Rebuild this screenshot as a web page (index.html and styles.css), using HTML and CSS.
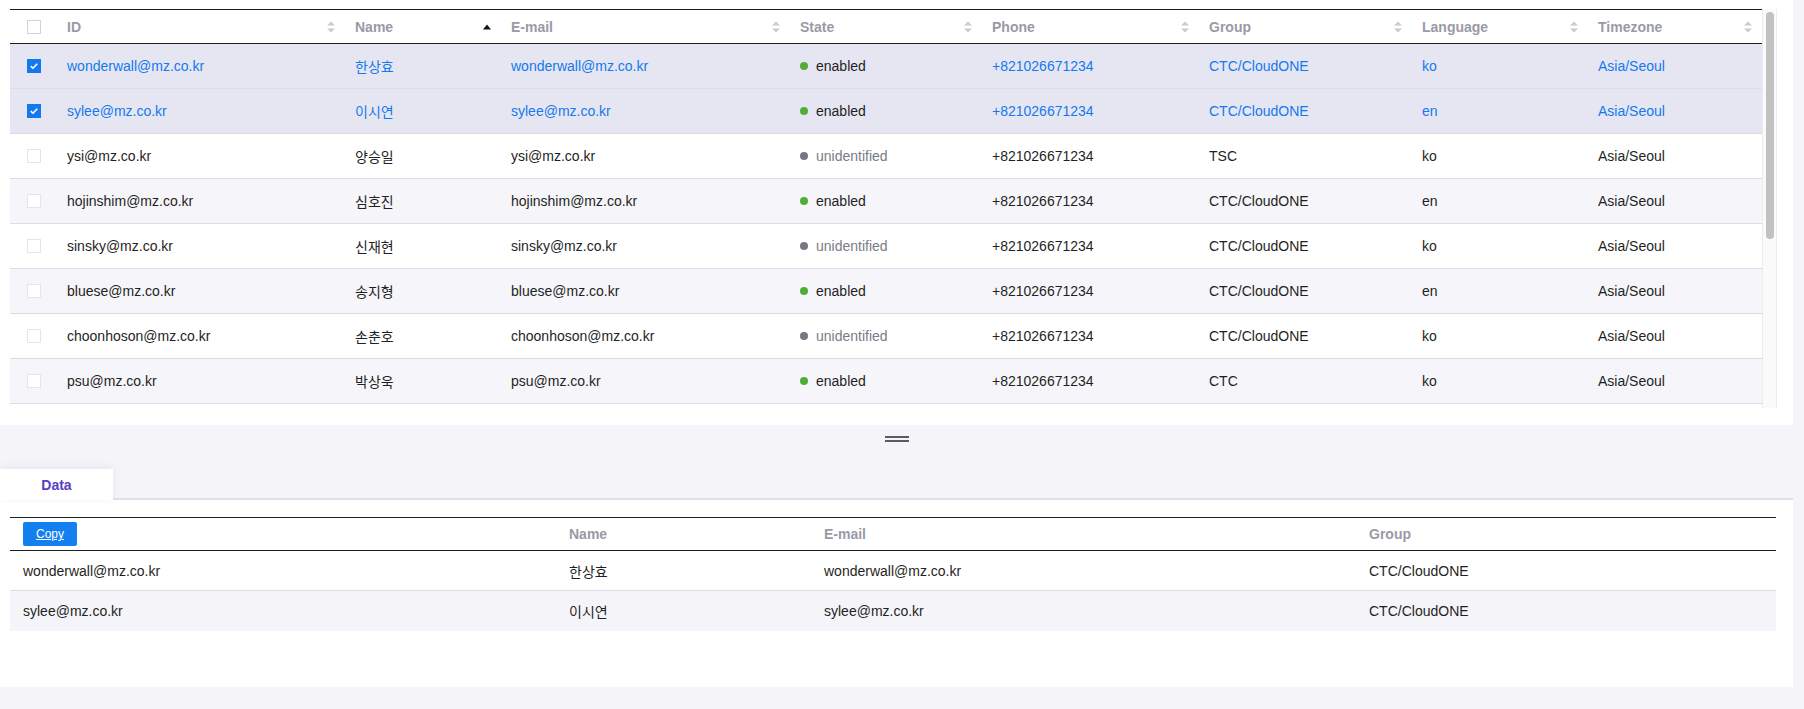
FILE: index.html
```html
<!DOCTYPE html>
<html lang="ko">
<head>
<meta charset="utf-8">
<title>Users</title>
<link rel="stylesheet" href="styles.css">
</head>
<body>
<div class="page">
  <section class="grid-panel">
    <div class="grid-frame">
      <div class="grid">
        <div class="row head">
          <div class="cell check"><span class="cb"></span></div>
          <div class="cell"><span>ID</span><svg class="sort" viewBox="0 0 8 12"><polygon points="0,4.5 4,0.5 8,4.5"/><polygon points="0,7.5 4,11.5 8,7.5"/></svg></div>
          <div class="cell"><span>Name</span><svg class="sort asc" viewBox="0 0 8 6"><polygon points="0,5.5 4,0.5 8,5.5"/></svg></div>
          <div class="cell"><span>E-mail</span><svg class="sort" viewBox="0 0 8 12"><polygon points="0,4.5 4,0.5 8,4.5"/><polygon points="0,7.5 4,11.5 8,7.5"/></svg></div>
          <div class="cell"><span>State</span><svg class="sort" viewBox="0 0 8 12"><polygon points="0,4.5 4,0.5 8,4.5"/><polygon points="0,7.5 4,11.5 8,7.5"/></svg></div>
          <div class="cell"><span>Phone</span><svg class="sort" viewBox="0 0 8 12"><polygon points="0,4.5 4,0.5 8,4.5"/><polygon points="0,7.5 4,11.5 8,7.5"/></svg></div>
          <div class="cell"><span>Group</span><svg class="sort" viewBox="0 0 8 12"><polygon points="0,4.5 4,0.5 8,4.5"/><polygon points="0,7.5 4,11.5 8,7.5"/></svg></div>
          <div class="cell"><span>Language</span><svg class="sort" viewBox="0 0 8 12"><polygon points="0,4.5 4,0.5 8,4.5"/><polygon points="0,7.5 4,11.5 8,7.5"/></svg></div>
          <div class="cell"><span>Timezone</span><svg class="sort" viewBox="0 0 8 12"><polygon points="0,4.5 4,0.5 8,4.5"/><polygon points="0,7.5 4,11.5 8,7.5"/></svg></div>
        </div>

        <div class="row sel">
          <div class="cell check"><span class="cb on"><svg viewBox="0 0 14 14"><polyline points="3.2,7.2 5.8,9.6 10.8,4.4"/></svg></span></div>
          <div class="cell">wonderwall@mz.co.kr</div>
          <div class="cell">한상효</div>
          <div class="cell">wonderwall@mz.co.kr</div>
          <div class="cell state on"><span class="dot"></span>enabled</div>
          <div class="cell">+821026671234</div>
          <div class="cell">CTC/CloudONE</div>
          <div class="cell">ko</div>
          <div class="cell">Asia/Seoul</div>
        </div>
        <div class="row sel">
          <div class="cell check"><span class="cb on"><svg viewBox="0 0 14 14"><polyline points="3.2,7.2 5.8,9.6 10.8,4.4"/></svg></span></div>
          <div class="cell">sylee@mz.co.kr</div>
          <div class="cell">이시연</div>
          <div class="cell">sylee@mz.co.kr</div>
          <div class="cell state on"><span class="dot"></span>enabled</div>
          <div class="cell">+821026671234</div>
          <div class="cell">CTC/CloudONE</div>
          <div class="cell">en</div>
          <div class="cell">Asia/Seoul</div>
        </div>
        <div class="row">
          <div class="cell check"><span class="cb"></span></div>
          <div class="cell">ysi@mz.co.kr</div>
          <div class="cell">양승일</div>
          <div class="cell">ysi@mz.co.kr</div>
          <div class="cell state off"><span class="dot"></span>unidentified</div>
          <div class="cell">+821026671234</div>
          <div class="cell">TSC</div>
          <div class="cell">ko</div>
          <div class="cell">Asia/Seoul</div>
        </div>
        <div class="row alt">
          <div class="cell check"><span class="cb"></span></div>
          <div class="cell">hojinshim@mz.co.kr</div>
          <div class="cell">심호진</div>
          <div class="cell">hojinshim@mz.co.kr</div>
          <div class="cell state on"><span class="dot"></span>enabled</div>
          <div class="cell">+821026671234</div>
          <div class="cell">CTC/CloudONE</div>
          <div class="cell">en</div>
          <div class="cell">Asia/Seoul</div>
        </div>
        <div class="row">
          <div class="cell check"><span class="cb"></span></div>
          <div class="cell">sinsky@mz.co.kr</div>
          <div class="cell">신재현</div>
          <div class="cell">sinsky@mz.co.kr</div>
          <div class="cell state off"><span class="dot"></span>unidentified</div>
          <div class="cell">+821026671234</div>
          <div class="cell">CTC/CloudONE</div>
          <div class="cell">ko</div>
          <div class="cell">Asia/Seoul</div>
        </div>
        <div class="row alt">
          <div class="cell check"><span class="cb"></span></div>
          <div class="cell">bluese@mz.co.kr</div>
          <div class="cell">송지형</div>
          <div class="cell">bluese@mz.co.kr</div>
          <div class="cell state on"><span class="dot"></span>enabled</div>
          <div class="cell">+821026671234</div>
          <div class="cell">CTC/CloudONE</div>
          <div class="cell">en</div>
          <div class="cell">Asia/Seoul</div>
        </div>
        <div class="row">
          <div class="cell check"><span class="cb"></span></div>
          <div class="cell">choonhoson@mz.co.kr</div>
          <div class="cell">손춘호</div>
          <div class="cell">choonhoson@mz.co.kr</div>
          <div class="cell state off"><span class="dot"></span>unidentified</div>
          <div class="cell">+821026671234</div>
          <div class="cell">CTC/CloudONE</div>
          <div class="cell">ko</div>
          <div class="cell">Asia/Seoul</div>
        </div>
        <div class="row alt">
          <div class="cell check"><span class="cb"></span></div>
          <div class="cell">psu@mz.co.kr</div>
          <div class="cell">박상욱</div>
          <div class="cell">psu@mz.co.kr</div>
          <div class="cell state on"><span class="dot"></span>enabled</div>
          <div class="cell">+821026671234</div>
          <div class="cell">CTC</div>
          <div class="cell">ko</div>
          <div class="cell">Asia/Seoul</div>
        </div>
      </div>
      <div class="vscroll"><div class="thumb"></div></div>
    </div>
  </section>

  <div class="splitter"><span class="grip"></span></div>

  <section class="detail">
    <div class="tabs"><div class="tab active">Data</div></div>
    <div class="detail-body">
      <div class="data">
        <div class="drow dhead">
          <div class="dcell"><button class="copy" type="button">Copy</button></div>
          <div class="dcell">Name</div>
          <div class="dcell">E-mail</div>
          <div class="dcell">Group</div>
        </div>
        <div class="drow">
          <div class="dcell">wonderwall@mz.co.kr</div>
          <div class="dcell">한상효</div>
          <div class="dcell">wonderwall@mz.co.kr</div>
          <div class="dcell">CTC/CloudONE</div>
        </div>
        <div class="drow alt last">
          <div class="dcell">sylee@mz.co.kr</div>
          <div class="dcell">이시연</div>
          <div class="dcell">sylee@mz.co.kr</div>
          <div class="dcell">CTC/CloudONE</div>
        </div>
      </div>
    </div>
  </section>
</div>
</body>
</html>
```

FILE: styles.css
```css
* { box-sizing: border-box; }

html, body {
  margin: 0;
  padding: 0;
}

body {
  background: #f5f5f9;
  font-family: "Liberation Sans", Arial, "Noto Sans CJK KR", sans-serif;
  font-size: 14px;
  color: #1f1f24;
  width: 1804px;
  height: 709px;
  overflow: hidden;
}

.page {
  width: 1793px;
}

/* ---------- top grid panel ---------- */
.grid-panel {
  background: #fff;
  height: 425px;
  padding: 9px 0 0 10px;
}

.grid-frame {
  display: flex;
  height: 399px;
}

.grid {
  width: 1752px;
  overflow: hidden;
}

.row {
  display: grid;
  grid-template-columns: 47px 288px 156px 289px 192px 217px 213px 176px 174px;
  height: 45px;
  border-bottom: 1px solid #dcdce4;
  align-items: center;
  background: #fff;
}

.row.alt { background: #f6f6fa; }

.row.sel {
  background: #e6e6f2;
  color: #1479ee;
}

.row.head {
  height: 35px;
  border-top: 1px solid #1e1e22;
  border-bottom: 1px solid #1e1e22;
  color: #9a9aa5;
  font-weight: bold;
  font-size: 14px;
  background: #fff;
}

.cell {
  padding: 0 10px;
  white-space: nowrap;
  overflow: hidden;
  display: flex;
  align-items: center;
  height: 100%;
}

.head .cell { justify-content: space-between; }

.cell.check {
  justify-content: center;
  padding: 0;
}

.cb {
  display: block;
  width: 14px;
  height: 14px;
  border: 1px solid #e4e4e9;
  background: #fff;
}

.head .cb { border-color: #d2d2d8; }

.cb.on {
  background: #1479ee;
  border-color: #1479ee;
}

.cb svg {
  display: block;
  width: 12px;
  height: 12px;
  fill: none;
  stroke: #fff;
  stroke-width: 1.9;
}

.sort {
  width: 8px;
  height: 12px;
  fill: #cacad2;
  flex: none;
}

.sort.asc {
  height: 6px;
  fill: #141414;
}

.state { color: #1f1f24; }
.state.off { color: #7b7b86; }

.dot {
  width: 8px;
  height: 8px;
  border-radius: 50%;
  margin-right: 8px;
  flex: none;
}

.state.on .dot { background: #52ad36; }
.state.off .dot { background: #777783; }

.vscroll {
  width: 15px;
  height: 399px;
  background: #fafafa;
  border-left: 1px solid #ececf0;
  border-right: 1px solid #ececf0;
  padding: 3px 0 0 3px;
}

.thumb {
  width: 8px;
  height: 227px;
  border-radius: 4px;
  background: #c1c1c1;
}

/* ---------- splitter ---------- */
.splitter {
  height: 44px;
  display: flex;
  justify-content: center;
  padding-top: 11px;
}

.grip {
  display: block;
  width: 24px;
  height: 6px;
  border-top: 2px solid #5b5b66;
  border-bottom: 2px solid #5b5b66;
}

/* ---------- detail ---------- */
.tabs {
  height: 31px;
  border-bottom: 2px solid #dfdfe6;
  display: flex;
}

.tab {
  width: 113px;
  height: 31px;
  margin-bottom: -2px;
  background: #fff;
  display: flex;
  align-items: center;
  justify-content: center;
  font-weight: bold;
  font-size: 14px;
  color: #5b3dc2;
  box-shadow: 0 -2px 8px rgba(40, 40, 80, 0.07);
}

.detail-body {
  background: #fff;
  height: 187px;
  padding: 17px 0 0 10px;
}

.data { width: 1766px; }

.drow {
  display: grid;
  grid-template-columns: 546px 255px 545px 420px;
  height: 40px;
  border-bottom: 1px solid #dcdce4;
  align-items: center;
}

.drow.alt { background: #f5f5f9; }
.drow.last { border-bottom: none; }

.drow.dhead {
  height: 34px;
  border-top: 1px solid #1e1e22;
  border-bottom: 1px solid #1e1e22;
  color: #9a9aa5;
  font-weight: bold;
  font-size: 14px;
}

.dcell {
  padding-left: 13px;
  white-space: nowrap;
}

.copy {
  display: block;
  width: 54px;
  height: 24px;
  border: none;
  border-radius: 2px;
  background: #1480f0;
  color: #fff;
  font-family: "Liberation Sans", Arial, sans-serif;
  font-size: 12px;
  text-decoration: underline;
  padding: 0;
  cursor: pointer;
}
```
